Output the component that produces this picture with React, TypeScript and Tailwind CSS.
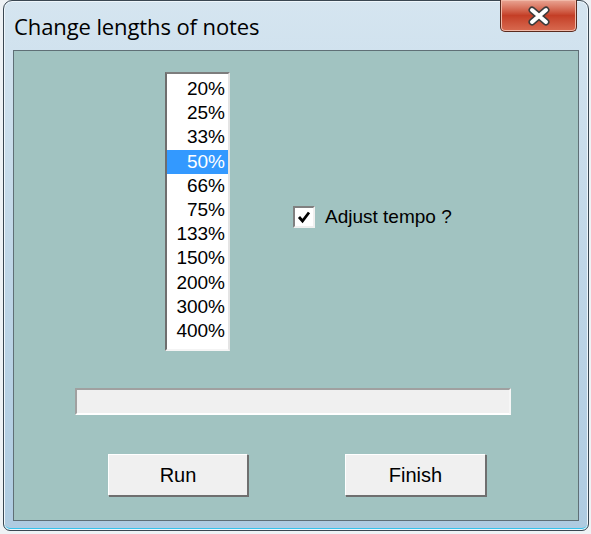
import React from "react";

const sizes = ["20%", "25%", "33%", "50%", "66%", "75%", "133%", "150%", "200%", "300%", "400%"];

const App = () => {
  return (
    <div className="w-[591px] h-[534px] bg-[#eef2f5] pl-[3px] pr-[2px] pb-[3px]" style={{ fontFamily: "'Liberation Sans', Arial, sans-serif" }}>
      {/* Window frame */}
      <div className="h-full flex flex-col rounded-t-[9px] rounded-b-[7px] border border-[#3a4752] bg-gradient-to-b from-[#d5e5f0] via-[#bfd6e7] to-[#aecbe1] shadow-[inset_0_0_0_1px_#eef6fb,inset_0_-2px_0_#36c3ec]">
        {/* Title bar */}
        <div className="flex justify-between h-[49px] pl-[10px] pr-[11px]">
          <span className="pt-[12px] text-[22px] leading-[26px] text-black tracking-[-0.1px]" style={{ fontFamily: "'Open Sans', 'Noto Sans', sans-serif" }}>
            Change lengths of notes
          </span>
          <button className="w-[77px] h-[32px] -mt-px flex items-center justify-center rounded-b-[5px] border border-t-0 border-[#5a2a1e] bg-gradient-to-b from-[#e9a594] via-[#c43e26] to-[#d86a50] shadow-[inset_0_0_0_1px_#f1b9a8]">
            <svg width="26" height="20" viewBox="0 0 26 20">
              <path d="M6 4 L20 16 M20 4 L6 16" stroke="#3c3c3c" strokeWidth="7" strokeLinecap="round" />
              <path d="M6 4 L20 16 M20 4 L6 16" stroke="#ffffff" strokeWidth="4" strokeLinecap="round" />
            </svg>
          </button>
        </div>

        {/* Client area */}
        <div className="flex-1 mx-[9px] mb-[9px] border border-[#5f6f76] bg-[#a1c3c1] flex flex-col text-[19px] text-black">
          <div className="flex items-center pt-[21px] pl-[151px]">
            {/* List box */}
            <div className="w-[65px] h-[279px] bg-white border-2 border-t-[#7d7d7d] border-l-[#6e6e6e] border-r-[#e4e4e4] border-b-[#f4f4f4] pt-[3px]">
              {sizes.map((s) => (
                <div
                  key={s}
                  className={`h-[24.2px] leading-[24px] text-right pr-[3px] ${s === "50%" ? "bg-[#3399ff] text-white" : ""}`}
                >
                  {s}
                </div>
              ))}
            </div>

            {/* Checkbox */}
            <label className="flex items-center gap-[10px] ml-[63px] mt-[11px]">
              <span className="w-[22px] h-[22px] bg-white border-2 border-t-[#808080] border-l-[#808080] border-r-[#f0f0f0] border-b-[#f0f0f0] flex items-center justify-center">
                <svg width="14" height="14" viewBox="0 0 14 14">
                  <path d="M2 7 L5.5 11 L12 2.5" fill="none" stroke="#000" strokeWidth="2.8" />
                </svg>
              </span>
              <span>Adjust tempo ?</span>
            </label>
          </div>

          {/* Progress bar */}
          <div className="ml-[61px] mt-[37px] w-[436px] h-[27px] bg-[#f0f0f0] border-2 border-t-[#a0a0a0] border-l-[#a0a0a0] border-r-[#f6f6f6] border-b-[#ffffff]" />

          {/* Buttons */}
          <div className="flex mt-[39px] pl-[94px] gap-[97px]">
            <button className="w-[140px] h-[42px] bg-[#f0f0f0] border border-t-white border-l-white border-r-[#6f6f6f] border-b-[#6f6f6f] shadow-[1px_1px_0_#6f6f6f] text-[20px]">
              Run
            </button>
            <button className="w-[141px] h-[42px] bg-[#f0f0f0] border border-t-white border-l-white border-r-[#6f6f6f] border-b-[#6f6f6f] shadow-[1px_1px_0_#6f6f6f] text-[20px]">
              Finish
            </button>
          </div>
        </div>
      </div>
    </div>
  );
};

export default App;
